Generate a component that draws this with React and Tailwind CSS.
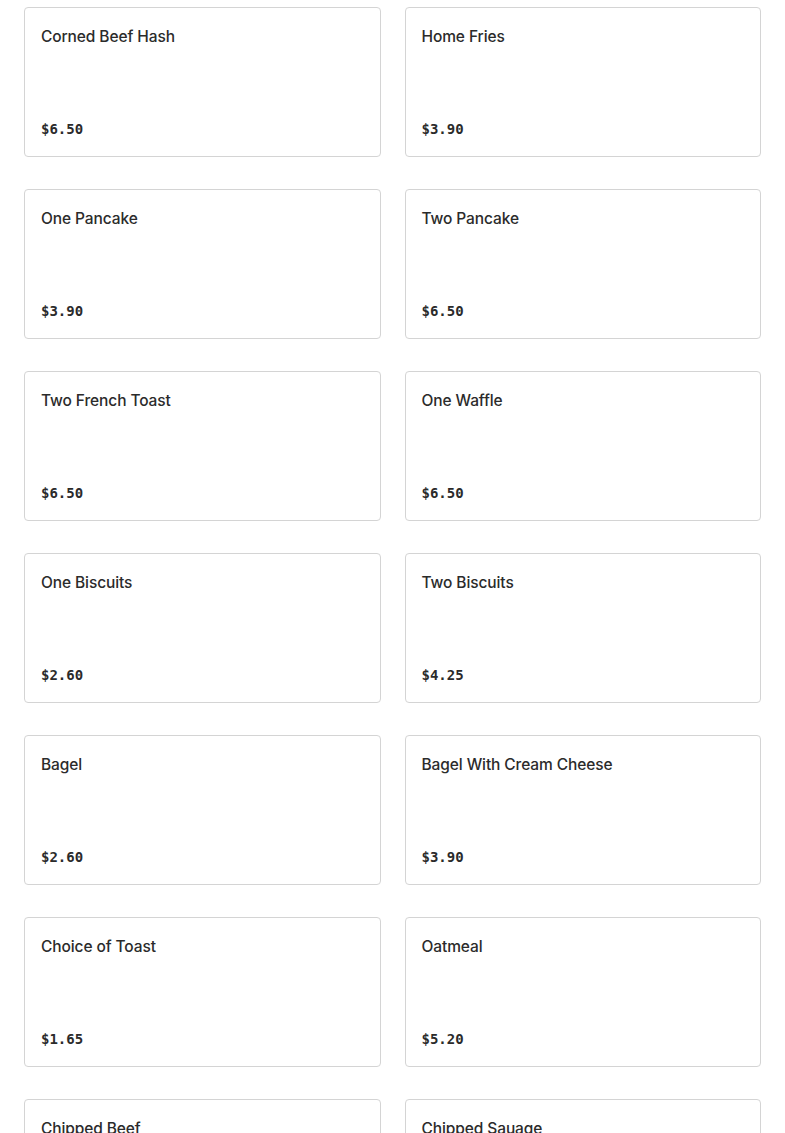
const items = [
  { name: "Corned Beef Hash", price: "$6.50" },
  { name: "Home Fries", price: "$3.90" },
  { name: "One Pancake", price: "$3.90" },
  { name: "Two Pancake", price: "$6.50" },
  { name: "Two French Toast", price: "$6.50" },
  { name: "One Waffle", price: "$6.50" },
  { name: "One Biscuits", price: "$2.60" },
  { name: "Two Biscuits", price: "$4.25" },
  { name: "Bagel", price: "$2.60" },
  { name: "Bagel With Cream Cheese", price: "$3.90" },
  { name: "Choice of Toast", price: "$1.65" },
  { name: "Oatmeal", price: "$5.20" },
  { name: "Chipped Beef", price: "$6.50" },
  { name: "Chipped Sauage", price: "$6.50" },
];

const App = () => {
  return (
    <div className="min-h-screen bg-white px-6 pt-[7px] pb-8">
      <div className="grid grid-cols-2 gap-x-6 gap-y-8">
        {items.map((item) => (
          <div
            key={item.name}
            className="flex h-[150px] flex-col justify-between rounded border border-[#d4d4d4] bg-white px-4 pt-[17px] pb-[17px]"
          >
            <h3 className="font-['Inter',sans-serif] text-[15.5px] font-medium leading-6 tracking-[-0.1px] text-[#2b2b2b]">
              {item.name}
            </h3>
            <p className="font-['DejaVu_Sans_Mono',monospace] text-[14px] font-semibold leading-5 text-[#2b2b2b]">
              {item.price}
            </p>
          </div>
        ))}
      </div>
    </div>
  );
};

export default App;
